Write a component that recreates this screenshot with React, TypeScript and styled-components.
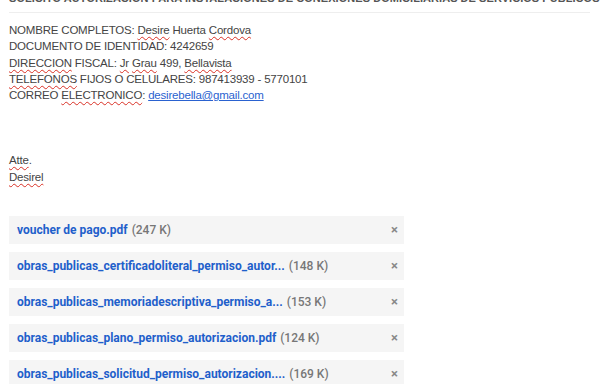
import React from 'react';
import styled, { createGlobalStyle } from 'styled-components';

const GlobalStyle = createGlobalStyle`
  body {
    margin: 0;
    background: #fff;
    font-family: 'Liberation Sans', Arial, sans-serif;
  }
`;

const Page = styled.div`
  padding: 0 0 0 9px;
  width: 600px;
  height: 384px;
  box-sizing: border-box;
  overflow: hidden;
`;

const SubjectClip = styled.div`
  height: 4px;
  overflow: hidden;
  display: flex;
  align-items: flex-end;
  padding-right: 10px;
`;

const Subject = styled.div`
  font-size: 11px;
  font-weight: bold;
  color: #555;
  white-space: nowrap;
  line-height: 1;
  letter-spacing: 0.05px;
`;

const Divider = styled.div`
  margin: 8px 10px 0 0;
  border-top: 1px solid #eeeeee;
`;

const Body = styled.div`
  margin-top: 9px;
  font-size: 11.5px;
  letter-spacing: -0.2px;
  line-height: 16.3px;
  color: #444;
`;

const Line = styled.div<{ $blank?: boolean }>`
  height: 16.3px;
  white-space: nowrap;
`;

const Typo = styled.span`
  text-decoration: underline wavy #d93025;
  text-decoration-thickness: 1px;
  text-underline-offset: 2px;
`;

const Mail = styled.a`
  color: #2a62d0;
  text-decoration: underline;
`;

const Attachments = styled.div`
  margin-top: 31px;
  display: flex;
  flex-direction: column;
  gap: 8px;
`;

const Chip = styled.div`
  width: 395px;
  height: 28px;
  box-sizing: border-box;
  background: #f5f5f5;
  display: flex;
  align-items: center;
  padding: 0 6px 0 8px;
  font-family: Roboto, 'Liberation Sans', sans-serif;
  font-size: 12px;
`;

const FileName = styled.span`
  color: #1f5fcb;
  font-weight: bold;
  white-space: nowrap;
`;

const FileSize = styled.span`
  color: #777;
  font-weight: 500;
  margin-left: 4px;
  white-space: nowrap;
`;

const Close = styled.span`
  margin-left: auto;
  color: #888;
  font-size: 13px;
  font-weight: bold;
`;

const files = [
  { name: 'voucher de pago.pdf', size: '(247 K)' },
  { name: 'obras_publicas_certificadoliteral_permiso_autor...', size: '(148 K)' },
  { name: 'obras_publicas_memoriadescriptiva_permiso_a...', size: '(153 K)' },
  { name: 'obras_publicas_plano_permiso_autorizacion.pdf', size: '(124 K)' },
  { name: 'obras_publicas_solicitud_permiso_autorizacion....', size: '(169 K)' },
];

export default function App() {
  return (
    <Page>
      <GlobalStyle />
      <SubjectClip>
        <Subject>SOLICITO AUTORIZACION PARA INSTALACIONES DE CONEXIONES DOMICILIARIAS DE SERVICIOS PUBLICOS</Subject>
      </SubjectClip>
      <Divider />
      <Body>
        <Line>
          NOMBRE COMPLETOS: <Typo>Desire</Typo> Huerta <Typo>Cordova</Typo>
        </Line>
        <Line>DOCUMENTO DE IDENTIDAD: 4242659</Line>
        <Line>
          <Typo>DIRECCION</Typo> FISCAL: <Typo>Jr</Typo> <Typo>Grau</Typo> 499, <Typo>Bellavista</Typo>
        </Line>
        <Line>
          <Typo>TELEFONOS</Typo> FIJOS O CELULARES: 987413939 - 5770101
        </Line>
        <Line>
          CORREO <Typo>ELECTRONICO</Typo>: <Mail href="#">desirebella@gmail.com</Mail>
        </Line>
        <Line $blank />
        <Line $blank />
        <Line $blank />
        <Line>
          <Typo>Atte</Typo>.
        </Line>
        <Line>
          <Typo>Desirel</Typo>
        </Line>
      </Body>
      <Attachments>
        {files.map((f) => (
          <Chip key={f.name}>
            <FileName>{f.name}</FileName>
            <FileSize>{f.size}</FileSize>
            <Close>×</Close>
          </Chip>
        ))}
      </Attachments>
    </Page>
  );
}
